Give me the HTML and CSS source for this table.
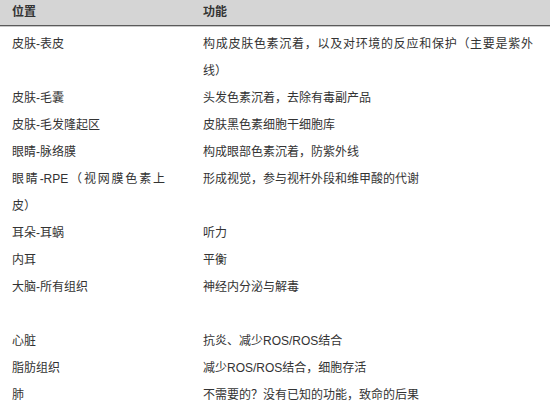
FILE: index.html
```html
<!DOCTYPE html>
<html lang="zh-CN">
<head>
<meta charset="utf-8">
<link rel="stylesheet" href="styles.css">
</head>
<body>
<div class="table">
  <div class="head cell c1">位置</div>
  <div class="head cell c2">功能</div>

  <div class="cell c1">皮肤-表皮</div>
  <div class="cell c2">构成皮肤色素沉着，以及对环境的反应和保护（主要是紫外线）</div>

  <div class="cell c1">皮肤-毛囊</div>
  <div class="cell c2">头发色素沉着，去除有毒副产品</div>

  <div class="cell c1">皮肤-毛发隆起区</div>
  <div class="cell c2">皮肤黑色素细胞干细胞库</div>

  <div class="cell c1">眼睛-脉络膜</div>
  <div class="cell c2">构成眼部色素沉着，防紫外线</div>

  <div class="cell c1">眼睛-RPE（视网膜色素上皮）</div>
  <div class="cell c2">形成视觉，参与视杆外段和维甲酸的代谢</div>

  <div class="cell c1">耳朵-耳蜗</div>
  <div class="cell c2">听力</div>

  <div class="cell c1">内耳</div>
  <div class="cell c2">平衡</div>

  <div class="cell c1">大脑-所有组织</div>
  <div class="cell c2">神经内分泌与解毒</div>

  <div class="cell c1 empty">&nbsp;</div>
  <div class="cell c2 empty">&nbsp;</div>

  <div class="cell c1">心脏</div>
  <div class="cell c2">抗炎、减少ROS/ROS结合</div>

  <div class="cell c1">脂肪组织</div>
  <div class="cell c2">减少ROS/ROS结合，细胞存活</div>

  <div class="cell c1">肺</div>
  <div class="cell c2">不需要的？没有已知的功能，致命的后果</div>
</div>
</body>
</html>
```

FILE: styles.css
```css
html, body {
  margin: 0;
  padding: 0;
  background: #ffffff;
}

body {
  font-family: "Liberation Sans", "Noto Sans CJK SC", sans-serif;
  font-size: 12px;
  color: #333333;
}

.table {
  display: grid;
  grid-template-columns: 191px 1fr;
  grid-auto-rows: min-content;
  width: 550px;
}

.cell {
  height: auto;
  line-height: 27px;
  text-align: justify;
  padding-left: 12px;
}

.c1 {
  padding-right: 26px;
}

.c2 {
  padding-right: 17px;
}

.head {
  background: #d5d5d5;
  font-weight: bold;
  line-height: 25px;
  color: #333333;
  border-bottom: 1px solid #5a5a5a;
  box-shadow: 0 1px 0 #c8c8c8;
  margin-bottom: 5px;
}
```
